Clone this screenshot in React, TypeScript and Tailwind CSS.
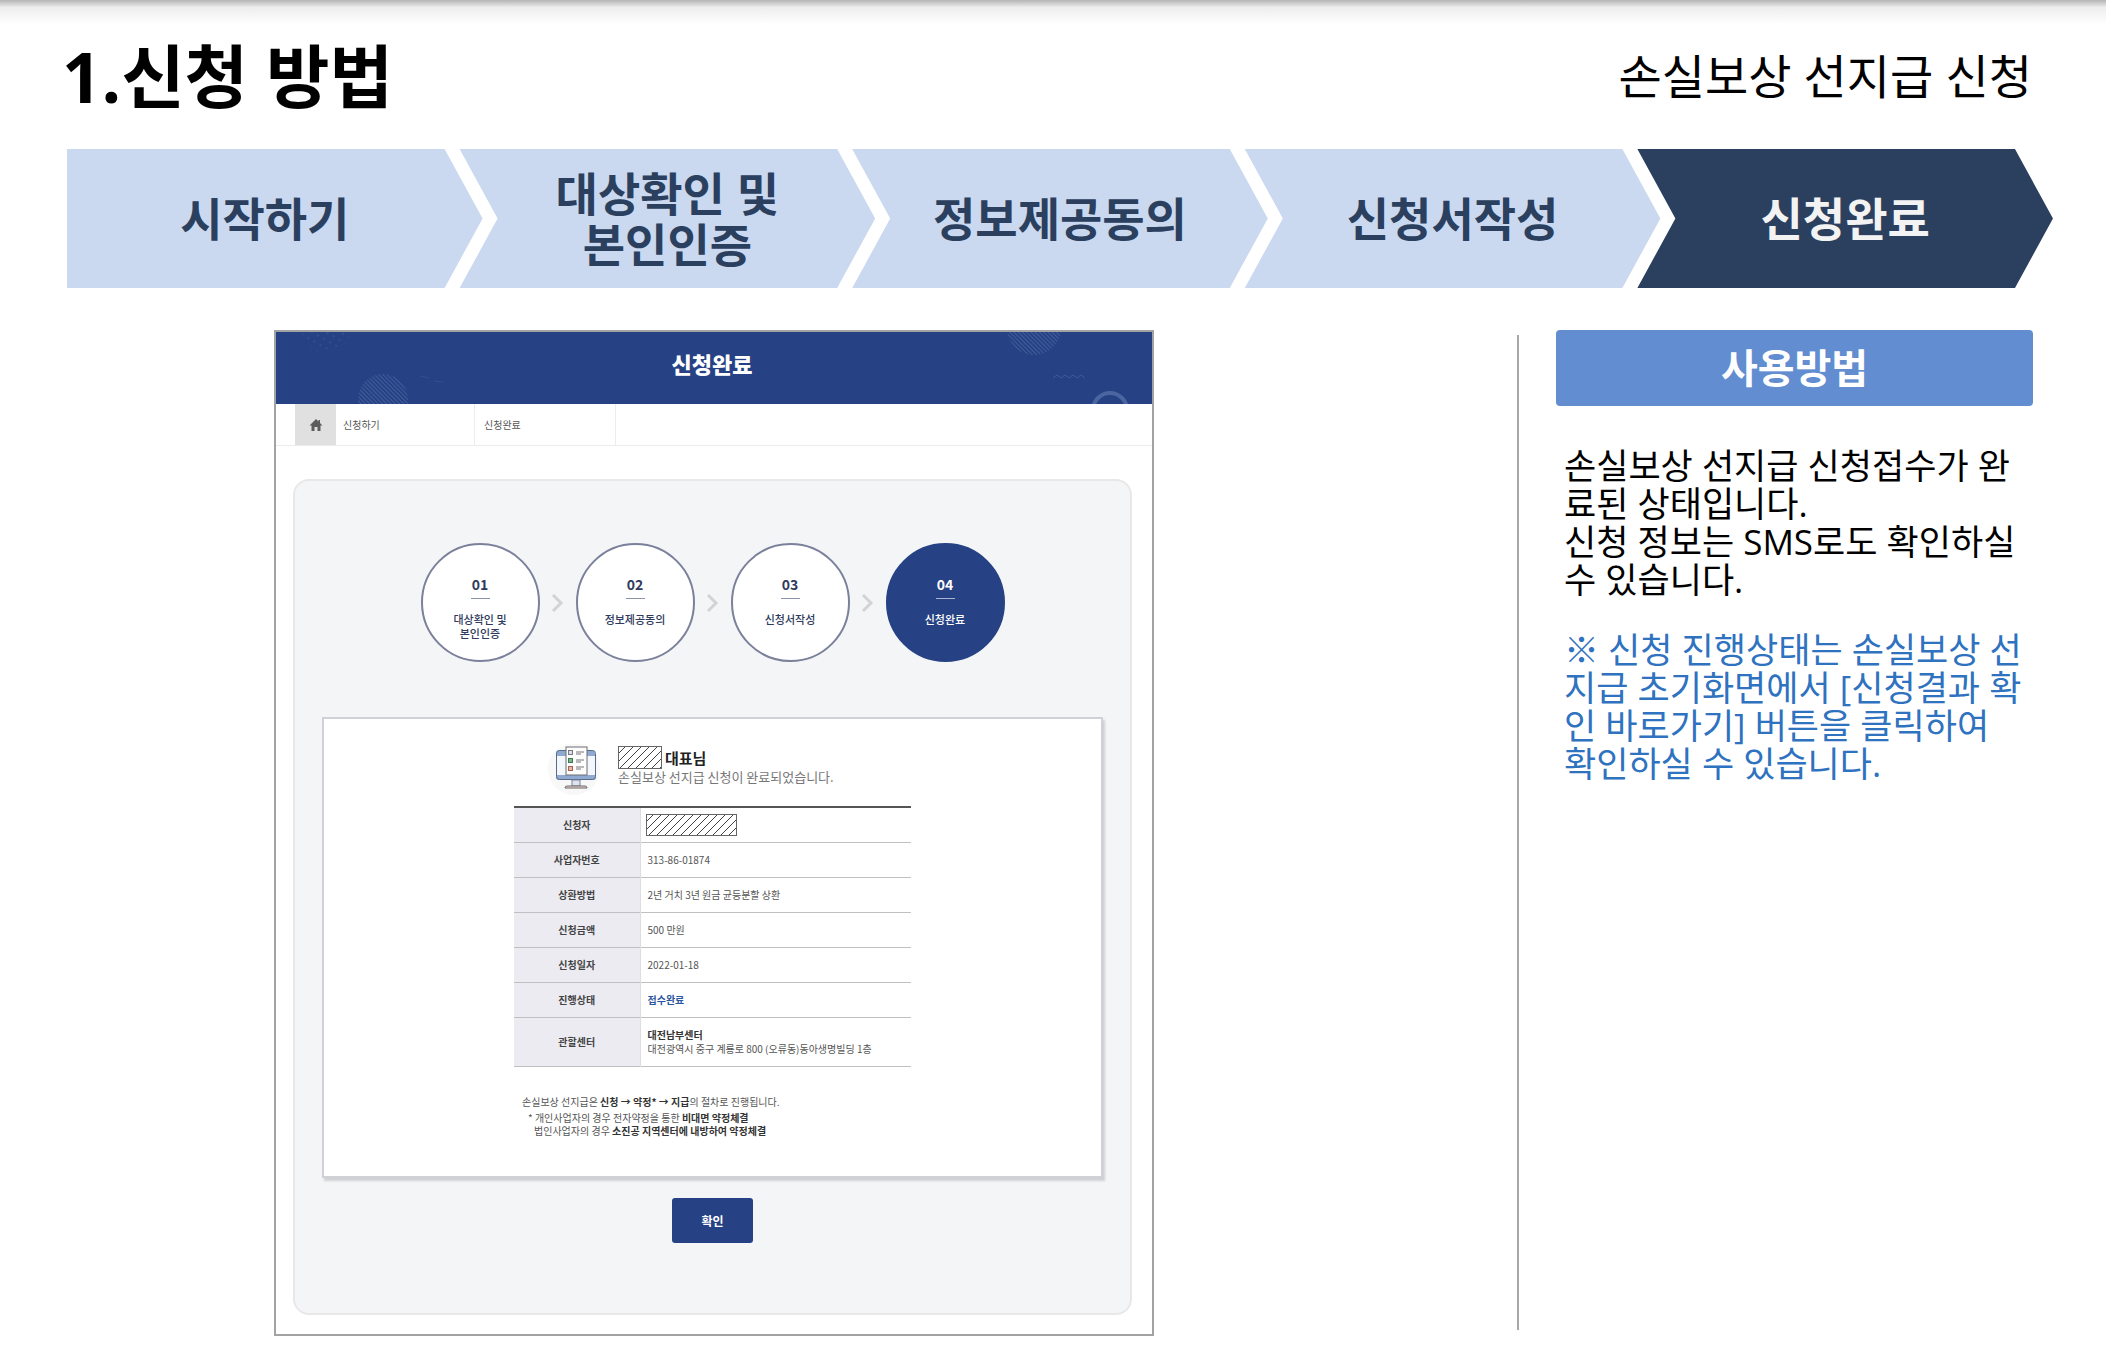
import React from "react";

const FONT = "font-['Open_Sans','Noto_Sans_CJK_KR',sans-serif]";
const FONT_KR = "font-['Noto_Sans_CJK_KR',sans-serif]";

const stages = [
  { lines: ["시작하기"], first: true },
  { lines: ["대상확인 및", "본인인증"] },
  { lines: ["정보제공동의"] },
  { lines: ["신청서작성"] },
  { lines: ["신청완료"], active: true },
];

function StageBar() {
  return (
    <ol className="flex h-[139px] text-[46px] leading-[51px] font-bold">
      {stages.map((s) => {
        const shape = s.first
          ? "[clip-path:polygon(0_0,calc(100%-38px)_0,100%_50%,calc(100%-38px)_100%,0_100%)]"
          : "-ml-[23px] [clip-path:polygon(0_0,calc(100%-38px)_0,100%_50%,calc(100%-38px)_100%,0_100%,38px_50%)]";
        const tone = s.active ? "bg-[#2b405f] text-[#f3f3f3]" : "bg-[#cad9ef] text-[#2b405f]";
        return (
          <li
            key={s.lines[0]}
            aria-current={s.active ? "step" : undefined}
            className={`flex min-w-0 flex-1 items-center justify-center ${shape} ${tone}`}
          >
            <div className={`flex flex-col items-center whitespace-nowrap ${s.first ? "pr-5" : ""}`}>
              {s.lines.map((l) => (
                <span key={l}>{l}</span>
              ))}
            </div>
          </li>
        );
      })}
    </ol>
  );
}

function HeaderArt() {
  return (
    <>
      <svg className="absolute top-0 left-0 h-full" width="190" height="72" viewBox="0 0 190 72" fill="none">
        <defs>
          <pattern id="diag" width="3" height="3" patternUnits="userSpaceOnUse" patternTransform="rotate(-45)">
            <rect width="1" height="3" fill="#5a76ae" />
          </pattern>
          <pattern id="dots" width="7" height="7" patternUnits="userSpaceOnUse" patternTransform="rotate(30)">
            <circle cx="3" cy="3" r="1" fill="#3c5998" />
          </pattern>
        </defs>
        <path d="M25 0h50c-4 12-12 20-25 20S29 12 25 0Z" fill="url(#dots)" opacity=".7" />
        <circle cx="107" cy="67" r="25" fill="url(#diag)" opacity=".5" />
        <path d="M144 44l9 2M158 49l10 1" stroke="#324f90" />
      </svg>
      <svg className="absolute top-0 right-0 h-full" width="160" height="72" viewBox="0 0 160 72" fill="none">
        <circle cx="42" cy="-4" r="27" fill="url(#diag)" opacity=".5" />
        <path d="M61 46l4-3 4 3 4-3 4 3 4-3 4 3 4-3 4 3" stroke="#3f5b9a" />
        <circle cx="118" cy="78" r="17" stroke="#4a659f" strokeWidth="4" />
      </svg>
    </>
  );
}

function Hatch({ className }: { className: string }) {
  return (
    <svg className={className} role="img" aria-label="가림 처리">
      <defs>
        <pattern id="hatch" width="8" height="8" patternUnits="userSpaceOnUse">
          <path d="M-1 9 9-1M-1 1 1-1M7 9 9 7" stroke="#444" strokeWidth="1" />
        </pattern>
      </defs>
      <rect width="100%" height="100%" fill="#fff" />
      <rect width="100%" height="100%" fill="url(#hatch)" stroke="#666" strokeWidth="2" />
    </svg>
  );
}

const steps = [
  { no: "01", lines: ["대상확인 및", "본인인증"] },
  { no: "02", lines: ["정보제공동의"] },
  { no: "03", lines: ["신청서작성"] },
  { no: "04", lines: ["신청완료"], active: true },
];

function Steps() {
  return (
    <ol className="flex justify-center">
      {steps.map((s, i) => (
        <li key={s.no} className="flex items-center">
          {i > 0 && (
            <svg width="36" height="20" viewBox="0 0 36 20" fill="none" stroke="#d2d3d5" strokeWidth="3">
              <path d="M13 2l8 8-8 8" />
            </svg>
          )}
          <div
            className={`flex size-[119px] flex-col items-center rounded-full border-2 pt-[30px] text-[11px] leading-[14px] font-medium ${
              s.active ? "border-[#264284] bg-[#264284] text-white" : "border-[#7b809b] bg-white text-[#2f3a5c]"
            }`}
          >
            <b className="text-[14px] leading-[18px]">{s.no}</b>
            <i className={`mt-[5px] mb-[13px] h-px w-[19px] ${s.active ? "bg-[#a9b5d3]" : "bg-[#8b93ab]"}`} />
            {s.lines.map((l) => (
              <span key={l}>{l}</span>
            ))}
          </div>
        </li>
      ))}
    </ol>
  );
}

function MonitorIcon() {
  return (
    <svg width="60" height="52" viewBox="0 0 60 52" fill="none">
      <circle cx="28" cy="25" r="26" fill="#f8f8f9" />
      <path d="M11 11q0-3 3-3h31q4 0 4 3v22H11Z" fill="#f3f6fa" />
      <path d="M10 12v-2q0-4 4-4h31q4 0 4 4v2Z" fill="#8fa9d2" />
      <path d="M10 31h40v2q0 3-3 3H13q-3 0-3-3Z" fill="#8fa9d2" />
      <rect x="10.500" y="6.500" width="39" height="29" rx="3" stroke="#5a6b88" />
      <path d="M26 36h8v6h-8Z" fill="#dfe5ee" stroke="#77839a" />
      <path d="M19 44q0-2 2-2h18q2 0 2 2Z" fill="#eadfda" stroke="#6f6464" />
      <rect x="20" y="3" width="21" height="28" fill="#fdfdfd" stroke="#6c6c70" />
      <rect x="22.500" y="6.500" width="4" height="4" fill="#dcdce4" stroke="#77778a" />
      <rect x="22.500" y="14.500" width="4" height="4" fill="#7fb58c" stroke="#3d7a50" />
      <rect x="22.500" y="22.500" width="4" height="4" fill="#e3b9a8" stroke="#a8614c" />
      <path d="M30 8h8M30 10h5M30 16h8M30 18h5M30 23h8M30 25h5" stroke="#77777c" />
    </svg>
  );
}

const rows: { label: string; value: React.ReactNode; tall?: boolean }[] = [
  { label: "신청자", value: <Hatch className="-ml-0.5 block h-[22px] w-[91px]" /> },
  { label: "사업자번호", value: "313-86-01874" },
  { label: "상환방법", value: "2년 거치 3년 원금 균등분할 상환" },
  { label: "신청금액", value: "500 만원" },
  { label: "신청일자", value: "2022-01-18" },
  { label: "진행상태", value: <b className="text-[#2a55a0]">접수완료</b> },
  {
    label: "관할센터",
    tall: true,
    value: (
      <>
        <b className="text-[#333]">대전남부센터</b>
        <br />
        대전광역시 중구 계룡로 800 (오류동)동아생명빌딩 1층
      </>
    ),
  },
];

function ResultCard() {
  return (
    <section className="mx-[27px] mt-[55px] flex h-[461px] flex-col items-center border-2 border-[#d0d1d8] bg-white pt-[25px] text-[10px] leading-[14px] text-[#555] shadow-[2px_3px_2px_#cfd0d3]">
      <div className="w-[397px]">
        <div className="flex gap-3 pl-8">
          <MonitorIcon />
          <div className="pt-0.5">
            <div className="flex items-center gap-[3px]">
              <Hatch className="block h-[23px] w-11" />
              <b className="text-[15px] leading-[23px] text-[#222]">대표님</b>
            </div>
            <p className="text-[13px] leading-4 text-[#777]">손실보상 선지급 신청이 완료되었습니다.</p>
          </div>
        </div>
        <table className="mt-2.5 w-full border-collapse border-t-2 border-t-[#555]">
          <tbody>
            {rows.map((r) => (
              <tr key={r.label} className={`border-b border-[#c0c0c4] ${r.tall ? "h-[49px]" : "h-[35px]"}`}>
                <th scope="row" className="w-[126px] border-r border-[#dcdce2] bg-[#ebebf1] p-0 font-bold text-[#444]">
                  {r.label}
                </th>
                <td className="py-0 pr-0 pl-[7px] text-left align-middle">{r.value}</td>
              </tr>
            ))}
          </tbody>
        </table>
        <div className="pt-7 pl-2 leading-[13px] whitespace-nowrap">
          <p>
            손실보상 선지급은 <b className="text-[#333]">신청 → 약정* → 지급</b>의 절차로 진행됩니다.
          </p>
          <p className="mt-[3px] pl-1.5">
            * 개인사업자의 경우 전자약정을 통한 <b className="text-[#333]">비대면 약정체결</b>
          </p>
          <p className="pl-3">
            법인사업자의 경우 <b className="text-[#333]">소진공 지역센터에 내방하여 약정체결</b>
          </p>
        </div>
      </div>
    </section>
  );
}

function Preview() {
  return (
    <article className={`w-[880px] shrink-0 border-2 border-[#a3a3a3] bg-white pb-[19px] ${FONT_KR}`}>
      <header className="relative flex h-[72px] items-center justify-center overflow-hidden bg-[#264284] pr-1 pb-2.5">
        <HeaderArt />
        <h2 className="text-[22px] leading-8 font-black text-white">신청완료</h2>
      </header>
      <nav className="flex h-[42px] border-b border-[#ececec] pl-[19px] text-[10px] text-[#555]">
        <a href="#home" aria-label="홈" className="flex w-[41px] items-center justify-center bg-[#e0e0e0]">
          <svg width="14" height="14" viewBox="0 0 14 14" fill="#5c5c5c">
            <path d="M7 1 0.500 7.500h2V13h3V9h3v4h3V7.500h2L11 5V2H9.500v1.500Z" />
          </svg>
        </a>
        <a href="#apply" className="flex w-[139px] items-center border-r border-[#ececec] pl-[7px]">
          신청하기
        </a>
        <a href="#done" className="flex w-[141px] items-center border-r border-[#ececec] pl-[9px]">
          신청완료
        </a>
      </nav>
      <div className="mt-[33px] mr-5 ml-[17px] h-[836px] rounded-2xl border-2 border-[#e8e8e9] bg-[#f4f5f7] pt-[62px]">
        <Steps />
        <ResultCard />
        <div className="mt-5 flex justify-center">
          <button type="button" className="h-[45px] w-[81px] rounded-[3px] bg-[#264284] text-[12px] font-bold text-white">
            확인
          </button>
        </div>
      </div>
    </article>
  );
}

function Guide() {
  return (
    <aside className="w-[514px] shrink-0">
      <h2 className="ml-[37px] flex h-[76px] items-center justify-center rounded bg-[#628dd0] text-[40px] leading-[48px] font-bold text-white">
        사용방법
      </h2>
      <div className="mt-[41px] ml-[45px] text-[35px] leading-[38px] whitespace-nowrap text-black">
        <p>
          손실보상 선지급 신청접수가 완<br />
          료된 상태입니다.
          <br />
          신청 정보는 SMS로도 확인하실
          <br />수 있습니다.
        </p>
        <p className="mt-8 text-[#2e72c0]">
          ※ 신청 진행상태는 손실보상 선<br />
          지급 초기화면에서 [신청결과 확<br />
          인 바로가기] 버튼을 클릭하여
          <br />
          확인하실 수 있습니다.
        </p>
      </div>
    </aside>
  );
}

export default function App() {
  return (
    <div className={`min-h-screen bg-white text-black ${FONT}`}>
      <div className="h-6 bg-linear-to-b from-[#b4b4b4] via-[#ededed] via-30% to-white" />
      <header className="flex h-[125px] justify-between pr-[74px] pl-[62px]">
        <h1 className="pt-1 text-[69px] leading-[96px] font-bold">1.신청 방법</h1>
        <p className="pt-5 text-[47px] leading-[64px]">손실보상 선지급 신청</p>
      </header>
      <div className="pr-[53px] pl-[67px]">
        <StageBar />
      </div>
      <main className="flex pt-[42px] pr-[73px] pb-[18px] pl-[274px]">
        <Preview />
        <div className="flex flex-1 justify-end pt-[5px] pb-1.5">
          <div className="w-0.5 bg-[#a8a8a8]" />
        </div>
        <Guide />
      </main>
    </div>
  );
}
